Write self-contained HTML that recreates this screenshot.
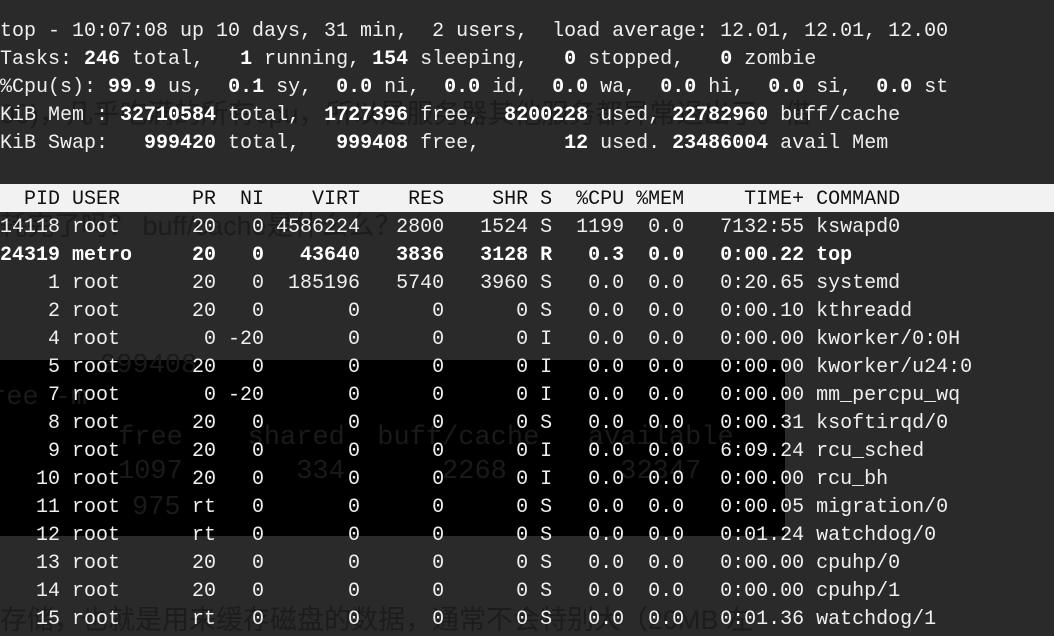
<!DOCTYPE html>
<html><head><meta charset="utf-8"><style>
html,body{margin:0;padding:0;background:#2a2a2a;width:1054px;height:636px;overflow:hidden;position:relative}
.blk{position:absolute;left:0;top:360px;width:785px;height:176px;background:#000}
.hdr{position:absolute;left:0;top:184px;width:1054px;height:28px;background:#f2f2f2}
.g{position:absolute;font-family:"Liberation Sans","Noto Sans CJK SC",sans-serif;font-size:27px;color:#1c1c1c;white-space:pre;line-height:28px}
.g2{position:absolute;font-family:"Liberation Mono",monospace;font-size:27px;color:#1a1a1a;white-space:pre;line-height:28px}
pre{position:absolute;left:0;top:18px;margin:0;font-family:"Liberation Mono","DejaVu Sans Mono",monospace;font-size:20px;line-height:28px;color:#efefef;white-space:pre}
b{font-weight:bold;color:#fff}
.h{color:#111}
</style></head><body>
<div class="g" style="left:0;top:100px">00)，几乎吃满的所有cpu，所以是服务器其他服务都异常退出了。借</div>
<div class="g" style="left:0;top:212px">耗完了吗？ buff/cache是什么么？</div>
<div class="g" style="left:0;top:606px">存储，也就是用来缓存磁盘的数据，通常不会特别大（20MB 左</div>
<div class="blk"></div>
<div class="g2" style="left:100px;top:352px">999408</div>
<div class="g2" style="left:-10px;top:384px">ree -m</div>
<div class="g2" style="left:118px;top:424px">free    shared  buff/cache   available</div>
<div class="g2" style="left:118px;top:458px">1097       334      2268       32347</div>
<div class="g2" style="left:132px;top:494px">975</div>
<div class="hdr"></div>
<pre>top - 10:07:08 up 10 days, 31 min,  2 users,  load average: 12.01, 12.01, 12.00
Tasks: <b>246</b> total,   <b>1</b> running, <b>154</b> sleeping,   <b>0</b> stopped,   <b>0</b> zombie
%Cpu(s): <b>99.9</b> us,  <b>0.1</b> sy,  <b>0.0</b> ni,  <b>0.0</b> id,  <b>0.0</b> wa,  <b>0.0</b> hi,  <b>0.0</b> si,  <b>0.0</b> st
KiB Mem : <b>32710584</b> total,  <b>1727396</b> free,  <b>8200228</b> used, <b>22782960</b> buff/cache
KiB Swap:   <b>999420</b> total,   <b>999408</b> free,       <b>12</b> used. <b>23486004</b> avail Mem

<span class="h">  PID USER      PR  NI    VIRT    RES    SHR S  %CPU %MEM     TIME+ COMMAND</span>
14118 root      20   0 4586224   2800   1524 S  1199  0.0   7132:55 kswapd0
<b>24319 metro     20   0   43640   3836   3128 R   0.3  0.0   0:00.22 top</b>
    1 root      20   0  185196   5740   3960 S   0.0  0.0   0:20.65 systemd
    2 root      20   0       0      0      0 S   0.0  0.0   0:00.10 kthreadd
    4 root       0 -20       0      0      0 I   0.0  0.0   0:00.00 kworker/0:0H
    5 root      20   0       0      0      0 I   0.0  0.0   0:00.00 kworker/u24:0
    7 root       0 -20       0      0      0 I   0.0  0.0   0:00.00 mm_percpu_wq
    8 root      20   0       0      0      0 S   0.0  0.0   0:00.31 ksoftirqd/0
    9 root      20   0       0      0      0 I   0.0  0.0   6:09.24 rcu_sched
   10 root      20   0       0      0      0 I   0.0  0.0   0:00.00 rcu_bh
   11 root      rt   0       0      0      0 S   0.0  0.0   0:00.05 migration/0
   12 root      rt   0       0      0      0 S   0.0  0.0   0:01.24 watchdog/0
   13 root      20   0       0      0      0 S   0.0  0.0   0:00.00 cpuhp/0
   14 root      20   0       0      0      0 S   0.0  0.0   0:00.00 cpuhp/1
   15 root      rt   0       0      0      0 S   0.0  0.0   0:01.36 watchdog/1</pre>
</body></html>
